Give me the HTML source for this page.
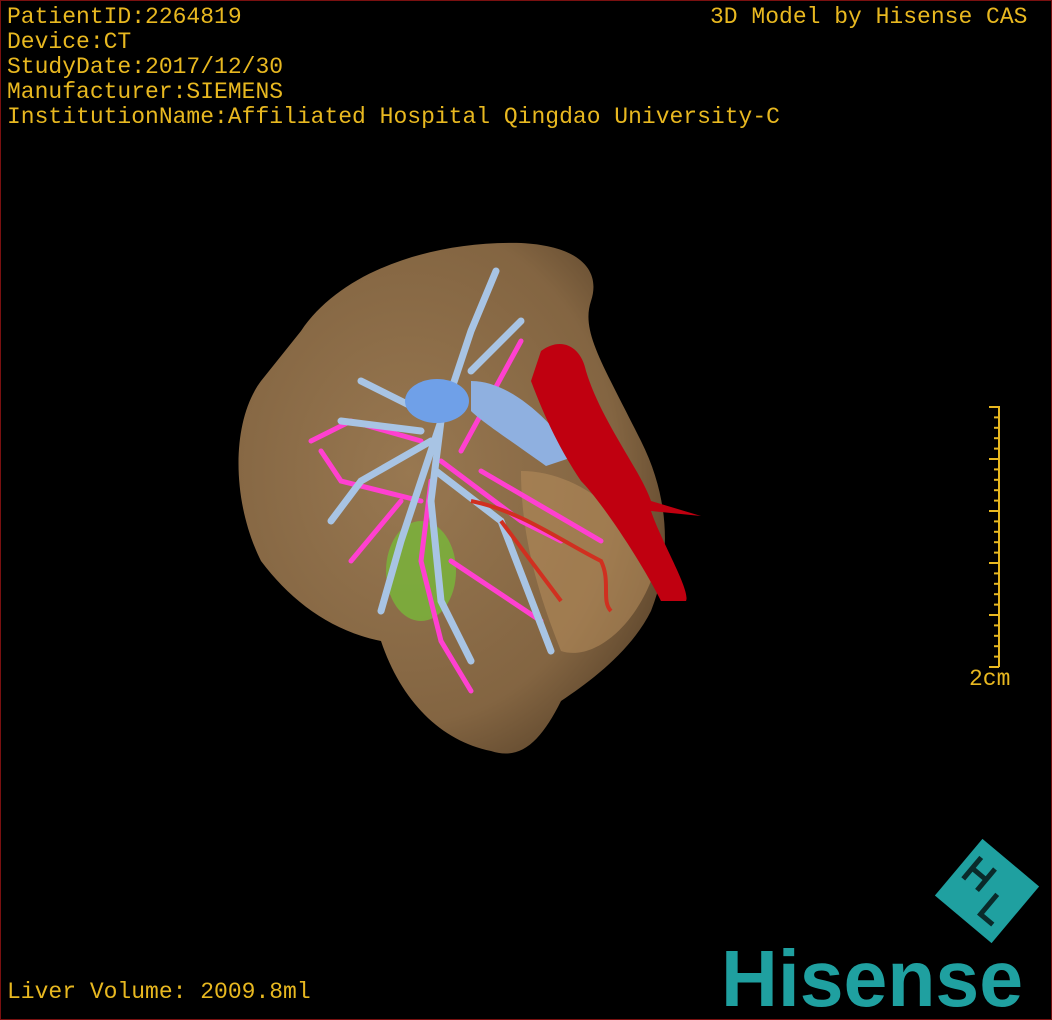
<!DOCTYPE html>
<html><head><meta charset="utf-8"><style>
html,body{margin:0;padding:0;background:#000;}
#w{position:relative;width:1050px;height:1018px;border:1px solid #7a1010;background:#000;overflow:hidden;font-family:"Liberation Mono","Noto Sans CJK SC",monospace;color:#e8b820;}
.t{position:absolute;font-size:23px;line-height:25px;white-space:pre;}
</style></head><body><div id="w">
<div class="t" style="left:6px;top:4px">PatientID:2264819<br>Device:CT<br>StudyDate:2017/12/30<br>Manufacturer:SIEMENS<br>InstitutionName:Affiliated Hospital Qingdao University-C</div>
<div class="t" style="left:709px;top:4px">3D Model by Hisense CAS</div>
<div class="t" style="left:6px;top:979px">Liver Volume: 2009.8ml</div>
<div class="t" style="left:968px;top:666px">2cm</div>
<svg width="1050" height="1018" style="position:absolute;left:0;top:0">
<defs><radialGradient id="lg" cx="0.4" cy="0.45" r="0.7"><stop offset="0" stop-color="#a07e55"/><stop offset="0.7" stop-color="#8a6a45"/><stop offset="1" stop-color="#5a432a"/></radialGradient></defs>
<path d="M300,330 C340,270 430,240 520,242 C580,245 600,270 590,300 C580,330 600,360 640,440 C670,500 670,560 650,610 C630,650 590,680 560,700 C540,740 520,760 490,750 C440,740 400,700 380,640 C330,630 290,600 260,560 C230,500 230,420 260,380 Z" fill="url(#lg)" opacity="0.95"/>
<path d="M520,470 C580,470 640,520 650,580 C630,630 590,660 560,650 C540,600 520,540 520,470Z" fill="#b38a5a" opacity="0.6"/>
<ellipse cx="420" cy="570" rx="35" ry="50" fill="#78b83a" opacity="0.8"/>
<g stroke="#ff40d0" stroke-width="5" fill="none" stroke-linecap="round">
<path d="M430,480 L420,560 L440,640 L470,690"/><path d="M440,460 L520,520 L560,540"/><path d="M420,500 L340,480 L320,450"/><path d="M420,440 L350,420 L310,440"/><path d="M460,450 L520,340"/><path d="M450,560 L540,620"/><path d="M400,500 L350,560"/><path d="M480,470 L600,540"/>
</g>
<g stroke="#a8c4e4" stroke-width="7" fill="none" stroke-linecap="round">
<path d="M440,420 L430,500 L440,600 L470,660"/><path d="M440,420 L470,330 L495,270"/><path d="M440,420 L360,380"/><path d="M430,440 L360,480 L330,520"/><path d="M435,470 L500,520 L550,650"/><path d="M440,420 L400,540 L380,610"/><path d="M470,370 L520,320"/><path d="M420,430 L340,420"/>
</g>
<path d="M470,380 C510,380 550,420 575,455 L545,465 C510,440 480,420 470,410Z" fill="#8fb0e0"/>
<ellipse cx="436" cy="400" rx="32" ry="22" fill="#6fa0e8"/>
<path d="M540,350 C560,335 580,345 585,370 C600,420 640,470 650,500 L700,515 L650,510 C660,540 690,590 685,600 L660,600 C640,560 600,500 580,480 C560,450 545,420 530,380Z" fill="#c00010"/>
<g stroke="#d03020" stroke-width="4" fill="none"><path d="M470,500 C520,510 560,540 600,560 C610,580 600,600 610,610"/><path d="M500,520 L560,600"/></g>
<line x1="998" y1="405" x2="998" y2="666" stroke="#e8b820" stroke-width="2"/>
<g stroke="#e8b820" stroke-width="2">
<line x1="988" y1="406" x2="998" y2="406"/><line x1="993" y1="416.4" x2="998" y2="416.4"/><line x1="993" y1="426.8" x2="998" y2="426.8"/><line x1="993" y1="437.2" x2="998" y2="437.2"/><line x1="993" y1="447.6" x2="998" y2="447.6"/>
<line x1="988" y1="458" x2="998" y2="458"/><line x1="993" y1="468.4" x2="998" y2="468.4"/><line x1="993" y1="478.8" x2="998" y2="478.8"/><line x1="993" y1="489.2" x2="998" y2="489.2"/><line x1="993" y1="499.6" x2="998" y2="499.6"/>
<line x1="988" y1="510" x2="998" y2="510"/><line x1="993" y1="520.4" x2="998" y2="520.4"/><line x1="993" y1="530.8" x2="998" y2="530.8"/><line x1="993" y1="541.2" x2="998" y2="541.2"/><line x1="993" y1="551.6" x2="998" y2="551.6"/>
<line x1="988" y1="562" x2="998" y2="562"/><line x1="993" y1="572.4" x2="998" y2="572.4"/><line x1="993" y1="582.8" x2="998" y2="582.8"/><line x1="993" y1="593.2" x2="998" y2="593.2"/><line x1="993" y1="603.6" x2="998" y2="603.6"/>
<line x1="988" y1="614" x2="998" y2="614"/><line x1="993" y1="624.4" x2="998" y2="624.4"/><line x1="993" y1="634.8" x2="998" y2="634.8"/><line x1="993" y1="645.2" x2="998" y2="645.2"/><line x1="993" y1="655.6" x2="998" y2="655.6"/><line x1="988" y1="666" x2="998" y2="666"/>
</g>
<g transform="translate(986,890) rotate(40)">
<rect x="-37" y="-37" width="74" height="74" fill="#1fa0a0"/>
<g stroke="#0a2a2a" stroke-width="5" fill="none"><path d="M-26,-22 L-26,6 M-8,-22 L-8,6 M-26,-8 L-8,-8"/><path d="M10,-4 L10,22 L26,22"/></g>
</g>
<text x="720" y="1005" font-family="Liberation Sans,sans-serif" font-weight="bold" font-size="80" fill="#1fa0a0" textLength="302" lengthAdjust="spacingAndGlyphs">Hisense</text>
</svg>
</div></body></html>
